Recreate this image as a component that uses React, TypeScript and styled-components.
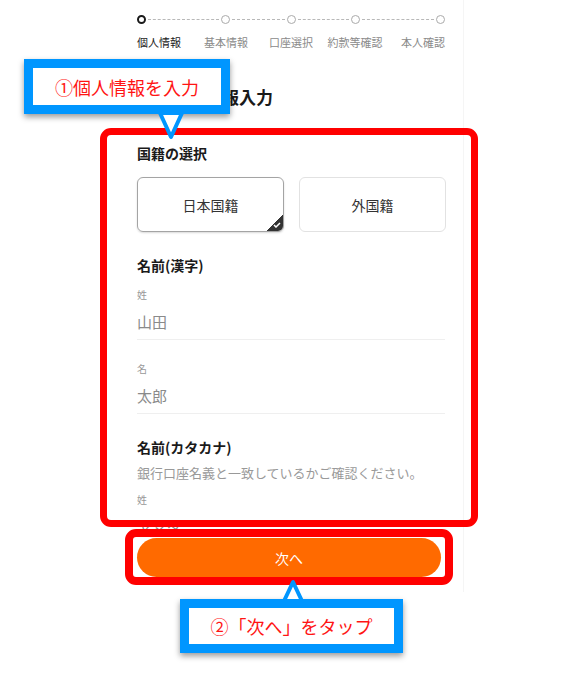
import React from "react";
import styled, { createGlobalStyle } from "styled-components";

const GlobalStyle = createGlobalStyle`
    html, body {
        margin: 0;
        padding: 0;
        background: #fff;
    }
    body {
        font-family: "Noto Sans CJK JP", "Noto Sans", sans-serif;
        color: #222;
    }
    * {
        box-sizing: border-box;
    }
`;

const steps = ["個人情報", "基本情報", "口座選択", "約款等確認", "本人確認"];
const gaps = [89, 65, 64, 90];

const App = () => {
    return (
        <Page>
            <GlobalStyle />
            <Screen>
                <Scroll>
                    <DotRow>
                        {steps.map((s, i) => (
                            <React.Fragment key={s}>
                                <Dot $active={i === 0} />
                                {i < steps.length - 1 && <Dash style={{ flexGrow: gaps[i] }} />}
                            </React.Fragment>
                        ))}
                    </DotRow>
                    <LabelRow>
                        {steps.map((s, i) => (
                            <React.Fragment key={s}>
                                <Tick $align={i === 0 ? "flex-start" : i === steps.length - 1 ? "flex-end" : "center"}>
                                    <StepLabel $active={i === 0}>{s}</StepLabel>
                                </Tick>
                                {i < steps.length - 1 && <Spacer style={{ flexGrow: gaps[i] }} />}
                            </React.Fragment>
                        ))}
                    </LabelRow>

                    <Title>お客さま情報入力</Title>

                    <SectionTitle $top={34}>国籍の選択</SectionTitle>
                    <Choices>
                        <Choice $selected>
                            日本国籍
                            <Corner>
                                <svg width="8" height="6" viewBox="0 0 8 6">
                                    <path d="M1 3 L3 5 L7 1" fill="none" stroke="#fff" strokeWidth="1.5" />
                                </svg>
                            </Corner>
                        </Choice>
                        <Choice>外国籍</Choice>
                    </Choices>

                    <SectionTitle $top={23}>名前(漢字)</SectionTitle>
                    <Field $top={13}>
                        <FieldLabel>姓</FieldLabel>
                        <FieldValue>山田</FieldValue>
                    </Field>
                    <Field $top={22}>
                        <FieldLabel>名</FieldLabel>
                        <FieldValue>太郎</FieldValue>
                    </Field>

                    <SectionTitle $top={23}>名前(カタカナ)</SectionTitle>
                    <Note>銀行口座名義と一致しているかご確認ください。</Note>
                    <Field $top={11}>
                        <FieldLabel>姓</FieldLabel>
                        <FieldValue>ヤマダ</FieldValue>
                    </Field>
                </Scroll>
                <Footer>
                    <NextButton>次へ</NextButton>
                </Footer>
            </Screen>

            <Frame $left={100} $top={128} $width={378} $height={399} $border={7} />
            <Frame $left={125} $top={529} $width={328} $height={56} $border={8} />

            <Callout $left={24} $top={59} $width={206} $height={55}>
                ①個人情報を入力
            </Callout>
            <Pointer $left={157} $top={111} width="28" height="30" viewBox="0 0 28 30">
                <polygon points="3,2 25,2 14,26" fill="#fff" stroke="#0096ff" strokeWidth="4" strokeLinejoin="round" />
            </Pointer>

            <Callout $left={180} $top={599} $width={223} $height={54}>
                ②「次へ」をタップ
            </Callout>
            <Pointer $left={281} $top={579} width="24" height="24" viewBox="0 0 24 24">
                <polygon points="3,22 21,22 12,3" fill="#fff" stroke="#0096ff" strokeWidth="4" strokeLinejoin="round" />
            </Pointer>
        </Page>
    );
};

export default App;

const Page = styled.div`
    position: relative;
    width: 576px;
    height: 673px;
    overflow: hidden;
    background: #fff;
`;
const Screen = styled.div`
    margin-left: 118px;
    width: 346px;
    height: 592px;
    display: flex;
    flex-direction: column;
    border-right: 1px solid #f5f5f5;
    background: #fff;
`;
const Scroll = styled.div`
    height: 530px;
    overflow: hidden;
    padding: 15px 18px 0 19px;
`;
const DotRow = styled.div`
    display: flex;
    align-items: center;
    height: 9px;
`;
const Dot = styled.span<{ $active?: boolean }>`
    width: 9px;
    height: 9px;
    flex: none;
    border-radius: 50%;
    border: ${(p) => (p.$active ? "2.5px solid #1a1a1a" : "1.2px solid #aaa")};
`;
const Dash = styled.span`
    flex-basis: 0;
    height: 0;
    margin: 0 2px;
    border-top: 1px dashed #b8b8b8;
`;
const LabelRow = styled.div`
    display: flex;
    margin-top: 11px;
    height: 14px;
`;
const Tick = styled.div<{ $align: string }>`
    width: 0;
    display: flex;
    justify-content: ${(p) => p.$align};
`;
const Spacer = styled.div`
    flex-basis: 0;
`;
const StepLabel = styled.span<{ $active?: boolean }>`
    font-size: 11px;
    line-height: 14px;
    white-space: nowrap;
    color: ${(p) => (p.$active ? "#222" : "#8a8a8a")};
`;
const Title = styled.h1`
    margin: 36px 0 0;
    font-size: 17px;
    line-height: 24px;
    font-weight: 700;
    color: #1a1a1a;
`;
const SectionTitle = styled.h2<{ $top: number }>`
    margin: ${(p) => p.$top}px 0 0;
    font-size: 14px;
    line-height: 20px;
    font-weight: 700;
    color: #1a1a1a;
`;
const Choices = styled.div`
    display: grid;
    grid-template-columns: 147px 147px;
    column-gap: 15px;
    margin-top: 14px;
`;
const Choice = styled.div<{ $selected?: boolean }>`
    position: relative;
    height: 55px;
    display: flex;
    align-items: center;
    justify-content: center;
    border-radius: 6px;
    overflow: hidden;
    font-size: 14px;
    color: #333;
    border: 1px solid ${(p) => (p.$selected ? "#a4a4a4" : "#e2e2e2")};
    box-shadow: ${(p) => (p.$selected ? "0 1px 2px rgba(0,0,0,0.15)" : "none")};
`;
const Corner = styled.span`
    position: absolute;
    right: 0;
    bottom: 0;
    width: 17px;
    height: 17px;
    background: linear-gradient(135deg, transparent 50%, #333 50%);
    display: flex;
    align-items: flex-end;
    justify-content: flex-end;
    padding: 0 2px 3px 0;
`;
const Field = styled.div<{ $top: number }>`
    margin-top: ${(p) => p.$top}px;
    padding-bottom: 6px;
    border-bottom: 1px solid #efefef;
`;
const FieldLabel = styled.div`
    font-size: 10px;
    line-height: 14px;
    color: #999;
`;
const FieldValue = styled.div`
    margin-top: 9px;
    font-size: 15px;
    line-height: 22px;
    color: #8a8a8a;
`;
const Note = styled.p`
    margin: 7px 0 0;
    font-size: 13px;
    line-height: 18px;
    color: #999;
`;
const Footer = styled.div`
    background: #fff;
    padding: 8px 0 0 19px;
`;
const NextButton = styled.button`
    width: 304px;
    height: 39px;
    border: none;
    border-radius: 20px;
    background: #ff6a00;
    color: #fff;
    font-family: "Noto Sans CJK JP", sans-serif;
    font-size: 14px;
`;
const Frame = styled.div<{ $left: number; $top: number; $width: number; $height: number; $border: number }>`
    position: absolute;
    left: ${(p) => p.$left}px;
    top: ${(p) => p.$top}px;
    width: ${(p) => p.$width}px;
    height: ${(p) => p.$height}px;
    border: ${(p) => p.$border}px solid #ff0000;
    border-radius: 11px;
`;
const Callout = styled.div<{ $left: number; $top: number; $width: number; $height: number }>`
    position: absolute;
    left: ${(p) => p.$left}px;
    top: ${(p) => p.$top}px;
    width: ${(p) => p.$width}px;
    height: ${(p) => p.$height}px;
    border: 9px solid #0096ff;
    background: #fff;
    box-shadow: 0 3px 6px rgba(0, 0, 0, 0.4);
    display: flex;
    align-items: center;
    justify-content: center;
    font-size: 18px;
    color: #ff1414;
    white-space: nowrap;
`;
const Pointer = styled.svg<{ $left: number; $top: number }>`
    position: absolute;
    left: ${(p) => p.$left}px;
    top: ${(p) => p.$top}px;
    z-index: 2;
`;
